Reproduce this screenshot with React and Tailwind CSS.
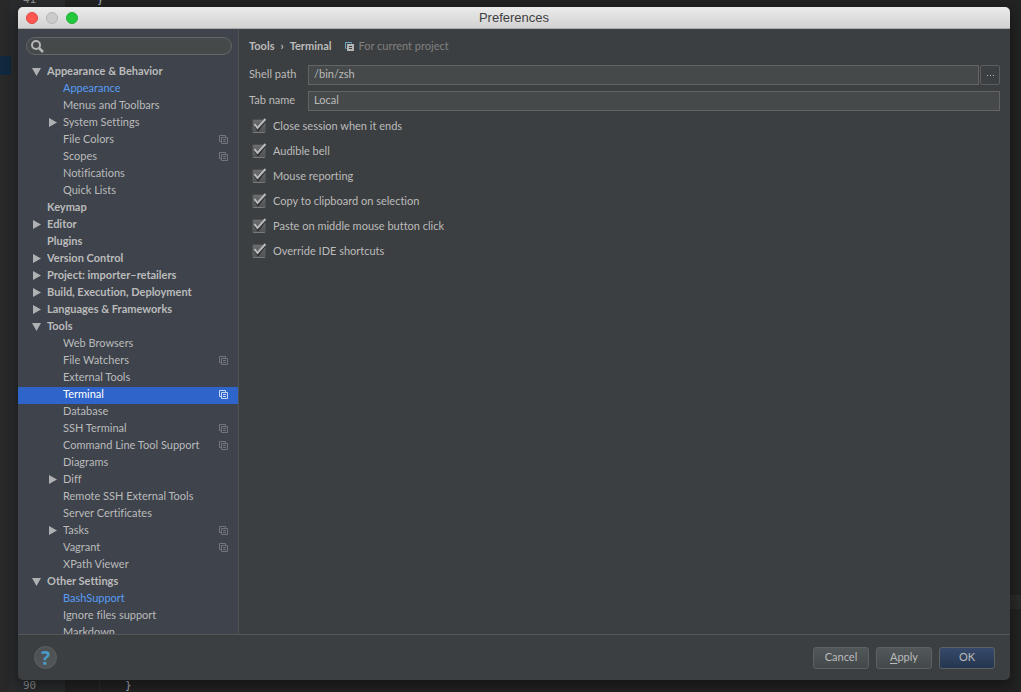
import { useState } from "react";

const TREE = [
  { label: "Appearance & Behavior", level: 0, arrow: "open" },
  { label: "Appearance", level: 1, changed: true },
  { label: "Menus and Toolbars", level: 1 },
  { label: "System Settings", level: 1, arrow: "closed" },
  { label: "File Colors", level: 1, project: true },
  { label: "Scopes", level: 1, project: true },
  { label: "Notifications", level: 1 },
  { label: "Quick Lists", level: 1 },
  { label: "Keymap", level: 0 },
  { label: "Editor", level: 0, arrow: "closed" },
  { label: "Plugins", level: 0 },
  { label: "Version Control", level: 0, arrow: "closed" },
  { label: "Project: importer–retailers", level: 0, arrow: "closed" },
  { label: "Build, Execution, Deployment", level: 0, arrow: "closed" },
  { label: "Languages & Frameworks", level: 0, arrow: "closed" },
  { label: "Tools", level: 0, arrow: "open" },
  { label: "Web Browsers", level: 1 },
  { label: "File Watchers", level: 1, project: true },
  { label: "External Tools", level: 1 },
  { label: "Terminal", level: 1, project: true },
  { label: "Database", level: 1 },
  { label: "SSH Terminal", level: 1, project: true },
  { label: "Command Line Tool Support", level: 1, project: true },
  { label: "Diagrams", level: 1 },
  { label: "Diff", level: 1, arrow: "closed" },
  { label: "Remote SSH External Tools", level: 1 },
  { label: "Server Certificates", level: 1 },
  { label: "Tasks", level: 1, arrow: "closed", project: true },
  { label: "Vagrant", level: 1, project: true },
  { label: "XPath Viewer", level: 1 },
  { label: "Other Settings", level: 0, arrow: "open" },
  { label: "BashSupport", level: 1, changed: true },
  { label: "Ignore files support", level: 1 },
  { label: "Markdown", level: 1 },
];

const OPTIONS = [
  "Close session when it ends",
  "Audible bell",
  "Mouse reporting",
  "Copy to clipboard on selection",
  "Paste on middle mouse button click",
  "Override IDE shortcuts",
];

function ProjectIcon({ className }) {
  return (
    <svg viewBox="0 0 9 9" className={`size-[9px] shrink-0 ${className}`} fill="none" stroke="currentColor" aria-hidden="true">
      <path d="M2 6.500H.5V.5h6V2" />
      <path d="M2.500 2.500h6v6h-6z" />
      <path d="M4 4.500h3M4 6.500h3" />
    </svg>
  );
}

function HeaderProjectIcon() {
  return (
    <svg viewBox="0 0 9 9" className="size-[9px] shrink-0" fill="none" aria-hidden="true">
      <path d="M1.500 6.500H.5V.5h6v1" stroke="#6ba7cb" />
      <path d="M2 2h7v7H2z" fill="#b4b6b7" />
      <path d="M4 4.500h3M4 6.500h3" stroke="#3c3f41" />
    </svg>
  );
}

function Arrow({ state }) {
  return (
    <svg viewBox="0 0 9 9" className="size-[9px]" fill="#afb1b3" aria-hidden="true">
      {state === "open" ? <path d="M0 1h9L4.500 9z" /> : <path d="M1 0l8 4.500L1 9z" />}
    </svg>
  );
}

function TreeRow({ item, selected, onSelect }) {
  const tone = selected ? "text-white" : item.changed ? "text-[#589df6]" : "text-[#bbbbbb]";
  return (
    <li>
      <button
        type="button"
        onClick={onSelect}
        aria-current={selected ? "page" : undefined}
        className={`flex h-[17px] w-full items-center pr-[10px] pb-[2px] text-left ${item.level === 0 ? "pl-[14px] font-bold" : "pl-[30px]"} ${selected ? "bg-[#2f65ca]" : ""} ${tone}`}
      >
        <span className="w-[15px] shrink-0">{item.arrow && <Arrow state={item.arrow} />}</span>
        <span className="flex-1 truncate pb-[2px] leading-[13px]">{item.label}</span>
        {item.project && <ProjectIcon className={selected ? "text-[#c6d8f5]" : "text-[#72767b]"} />}
      </button>
    </li>
  );
}

function CheckOption({ label }) {
  return (
    <label className="flex h-[25px] items-center gap-[7px]">
      <span className="relative mb-[2px] size-[14px]">
        <input
          type="checkbox"
          defaultChecked
          className="peer block size-[14px] appearance-none rounded-[2px] border border-[#4c4e50] border-b-[#77797a] bg-linear-to-b from-[#6b6d6e] to-[#505354]"
        />
        <svg viewBox="0 0 14 15" className="pointer-events-none absolute -top-px left-0 hidden h-[15px] w-[14px] peer-checked:block" fill="none" aria-hidden="true">
          <path d="M3 8L6 12L13 3" stroke="#2b2d2e" strokeWidth="2" />
          <path d="M2.500 6L5.500 10L13.500 1" stroke="#b8baba" strokeWidth="2" />
        </svg>
      </span>
      <span>{label}</span>
    </label>
  );
}

function EditorBackdrop() {
  return (
    <div className="absolute inset-0 flex font-['DejaVu_Sans_Mono',monospace] text-[11px] leading-[14px]" aria-hidden="true">
      <div className="w-[11px] bg-[#292929] pt-[56px]">
        <div className="h-[19px] bg-[#10293f]" />
      </div>
      <div className="flex w-[54px] flex-col justify-between bg-[#2a2c2e] pl-[12px] text-[#8d9092]">
        <span className="-mt-[7px]">41</span>
        <span className="-mb-px">90</span>
      </div>
      <div className="flex flex-1 flex-col justify-between bg-[#232323] text-[#a9b7c6]">
        <span className="-mt-[7px] pl-[32px]">{"}"}</span>
        <span className="-mb-px ml-[34px] border-l border-[#2c2c2c] pl-[25px]">{"}"}</span>
      </div>
      <div className="flex w-[11px] flex-col justify-end bg-[#232323] pb-[83px]">
        <div className="h-[14px] bg-[#2b2b2b]" />
      </div>
    </div>
  );
}

const BUTTON =
  "h-[22px] w-[56px] rounded-[3px] border border-[#5e6162] bg-linear-to-b from-[#525759] to-[#43484a] pb-[2px] leading-[18px]";
const FIELD =
  "h-[20px] min-w-0 flex-1 border border-[#646464] bg-[#45494a] px-[5px] pb-[3px] text-[#bbbbbb] outline-none";

export default function App() {
  const [selected, setSelected] = useState("Terminal");

  return (
    <div className="relative isolate flex h-screen overflow-hidden bg-[#232323] pt-[7px] pr-[11px] pb-[12px] pl-[18px] font-['Lato',sans-serif] text-[11px] text-[#bbbbbb] [font-variant-ligatures:none]">
      <EditorBackdrop />
      <main className="relative flex min-w-0 flex-1 flex-col overflow-hidden rounded-[5px] bg-[#3c3f41] shadow-[0_5px_14px_2px_rgba(0,0,0,0.4)]">
        <header className="grid h-[22px] shrink-0 grid-cols-[1fr_auto_1fr] items-center border-b border-[#a9acab] bg-linear-to-b from-[#ebebeb] to-[#d2d2d2] px-[8px]">
          <div className="flex gap-[8px]">
            <button type="button" aria-label="Close" className="size-[12px] rounded-full border border-[#e2463f] bg-[#ff5850]" />
            <button type="button" aria-label="Minimize" className="size-[12px] rounded-full border border-[#b5b5b5] bg-[#cbcbcb]" />
            <button type="button" aria-label="Zoom" className="size-[12px] rounded-full border border-[#1fae35] bg-[#23c83c]" />
          </div>
          <h1 className="pt-px font-['Liberation_Sans',sans-serif] text-[13px] leading-[20px] text-[#414141]">Preferences</h1>
        </header>

        <div className="flex min-h-0 flex-1">
          <aside className="flex w-[221px] shrink-0 flex-col border-r border-[#505254] bg-[#3e434c] pt-[8px]">
            <label className="mr-[6px] ml-[8px] flex h-[18px] shrink-0 items-center rounded-full border border-[#646667] bg-[#45494a] pl-[3px]">
              <svg viewBox="0 0 14 14" className="size-[14px] shrink-0" fill="none" stroke="#b4b6b7" aria-hidden="true">
                <circle cx="6" cy="6" r="4" strokeWidth="2" />
                <path d="M9 9L13 13" strokeWidth="2.500" />
              </svg>
              <input type="search" aria-label="Search settings" className="min-w-0 flex-1 bg-transparent px-1 outline-none" />
            </label>
            <nav aria-label="Settings" className="mt-[9px] min-h-0 flex-1 overflow-hidden">
              <ul>
                {TREE.map((item) => (
                  <TreeRow
                    key={item.label}
                    item={item}
                    selected={item.label === selected}
                    onSelect={() => setSelected(item.label)}
                  />
                ))}
              </ul>
            </nav>
          </aside>

          <section className="min-w-0 flex-1 pt-[9px] pr-[10px] pl-[10px]">
            <div className="flex h-[16px] items-center">
              <h2 className="flex gap-[6px] font-bold">
                <span>Tools</span>
                <span>›</span>
                <span>Terminal</span>
              </h2>
              <span className="ml-[14px] flex items-center gap-[4px] text-[#808080]">
                <HeaderProjectIcon />
                For current project
              </span>
            </div>
            <div className="mt-[11px] grid grid-cols-[48px_1fr] items-center gap-x-[11px] gap-y-[6px] whitespace-nowrap">
              <label htmlFor="shell-path" className="pb-[2px]">Shell path</label>
              <div className="flex gap-px">
                <input id="shell-path" type="text" defaultValue="/bin/zsh" className={FIELD} />
                <button type="button" aria-label="Browse" className="flex h-[20px] w-[20px] items-center justify-center rounded-[2px] border border-[#5b5d5e]">
                  <svg viewBox="0 0 7 1" className="h-px w-[7px]" fill="#bbbbbb" aria-hidden="true">
                    <path d="M0 0h1v1H0zM3 0h1v1H3zM6 0h1v1H6z" />
                  </svg>
                </button>
              </div>
              <label htmlFor="tab-name" className="pb-[2px]">Tab name</label>
              <div className="flex">
                <input id="tab-name" type="text" defaultValue="Local" className={FIELD} />
              </div>
            </div>
            <div className="mt-[3px] flex flex-col items-start pl-[3px]">
              {OPTIONS.map((label) => (
                <CheckOption key={label} label={label} />
              ))}
            </div>
          </section>
        </div>

        <footer className="flex h-[46px] shrink-0 items-center gap-[7px] border-t border-[#555555] pr-[15px] pl-[16px]">
          <button
            type="button"
            aria-label="Help"
            className="mr-auto size-[23px] rounded-full border border-[#5e6162] bg-linear-to-b from-[#4d5153] to-[#505557] font-['Noto_Sans',sans-serif] text-[19px] leading-[20px] font-bold text-[#4a9bc7]"
          >
            ?
          </button>
          <button type="button" className={BUTTON}>Cancel</button>
          <button type="button" className={BUTTON}>
            <span className="underline underline-offset-2">A</span>pply
          </button>
          <button
            type="button"
            className="h-[22px] w-[56px] rounded-[3px] border border-[#5e6162] bg-linear-to-b from-[#36496b] to-[#24364e] pb-[2px] leading-[18px]"
          >
            OK
          </button>
        </footer>
      </main>
    </div>
  );
}
